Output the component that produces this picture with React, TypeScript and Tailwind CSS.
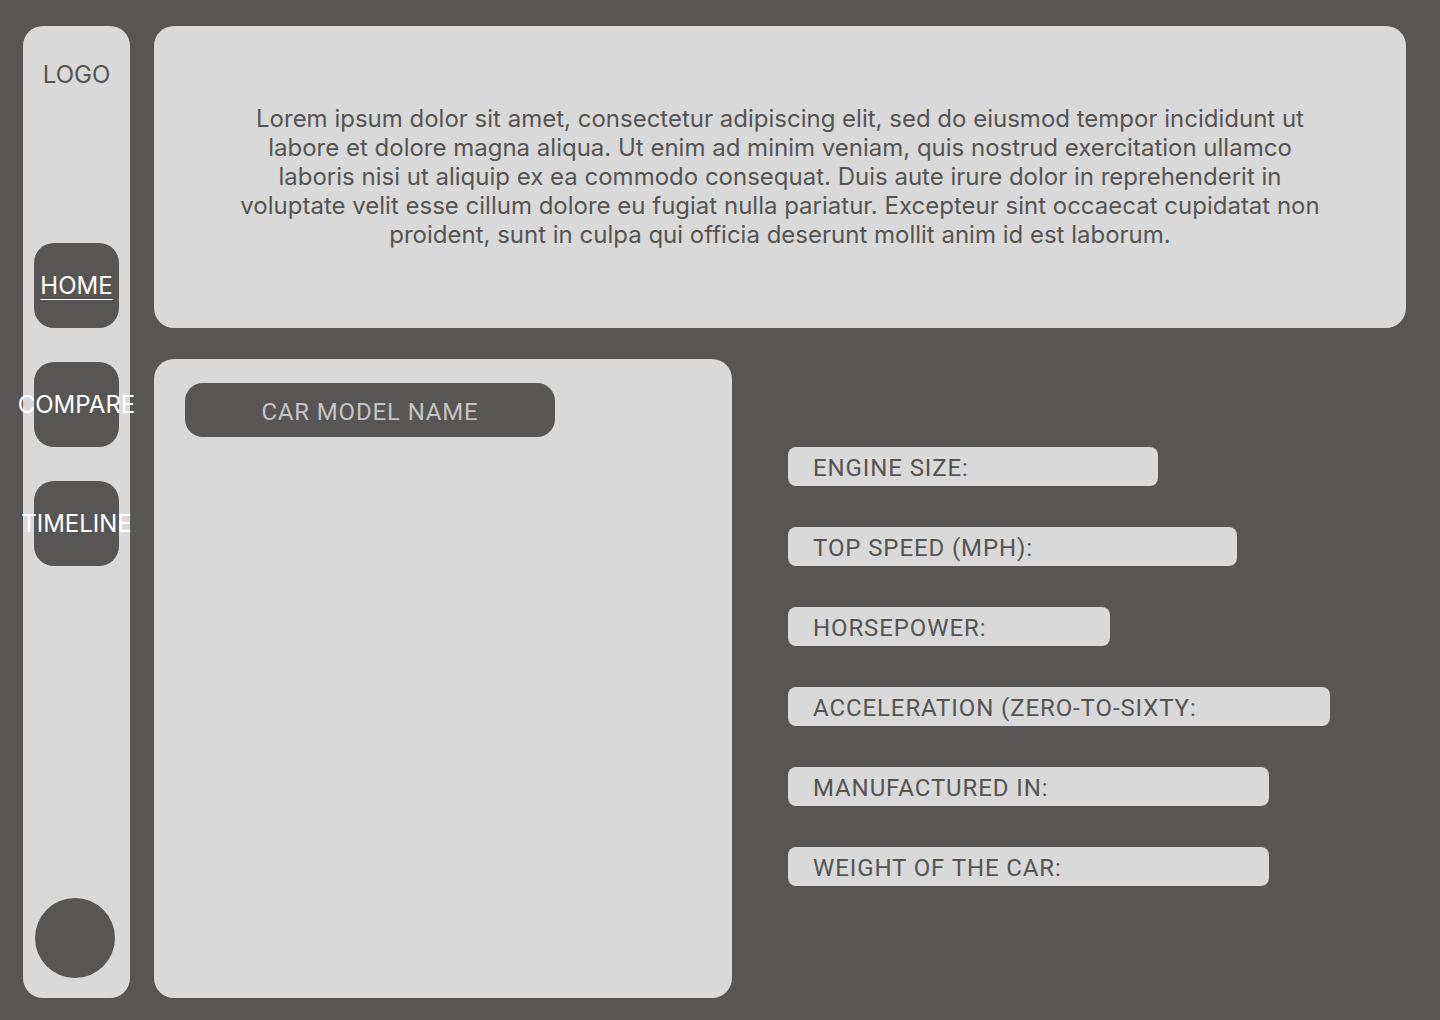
const specs = [
  { label: 'ENGINE SIZE:', width: 'w-[370px]' },
  { label: 'TOP SPEED (MPH):', width: 'w-[449px]' },
  { label: 'HORSEPOWER:', width: 'w-[322px]' },
  { label: 'ACCELERATION (ZERO-TO-SIXTY:', width: 'w-[542px]' },
  { label: 'MANUFACTURED IN:', width: 'w-[481px]' },
  { label: 'WEIGHT OF THE CAR:', width: 'w-[481px]' },
];

const navItems = [
  { label: 'HOME', active: true },
  { label: 'COMPARE', active: false },
  { label: 'TIMELINE', active: false },
];

function Sidebar() {
  return (
    <aside className="flex h-[972px] w-[107px] shrink-0 flex-col items-center rounded-[20px] bg-[#d9d9d9]">
      <div className="mt-[34px] text-[24px] leading-[29px] text-[#555453]">LOGO</div>

      <nav className="mt-[154px] flex flex-col gap-[34px]">
        {navItems.map((item) => (
          <a
            key={item.label}
            href="#"
            className="flex h-[85px] w-[85px] items-center justify-center whitespace-nowrap rounded-[20px] bg-[#575654] text-[24px] text-white"
          >
            <span className={item.active ? 'underline decoration-1 underline-offset-[5px]' : ''}>
              {item.label}
            </span>
          </a>
        ))}
      </nav>

      {/* avatar */}
      <div className="mt-auto mb-[20px] ml-[-3px] h-[80px] w-[80px] rounded-full bg-[#575654]" />
    </aside>
  );
}

export default function App() {
  return (
    <div
      className="flex h-[1020px] w-[1440px] gap-[24px] bg-[#575654] pl-[23px] pt-[26px]"
      style={{ fontFamily: 'Inter, "Noto Sans", sans-serif' }}
    >
      <Sidebar />

      <main className="flex flex-col">
        <section className="flex h-[302px] w-[1252px] items-center justify-center rounded-[20px] bg-[#d9d9d9] pb-[1px]">
          <p className="w-[1090px] text-center text-[24px] leading-[29px] text-[#555453]">
            Lorem ipsum dolor sit amet, consectetur adipiscing elit, sed do eiusmod tempor incididunt ut labore et
            dolore magna aliqua. Ut enim ad minim veniam, quis nostrud exercitation ullamco laboris nisi ut aliquip ex
            ea commodo consequat. Duis aute irure dolor in reprehenderit in voluptate velit esse cillum dolore eu fugiat
            nulla pariatur. Excepteur sint occaecat cupidatat non proident, sunt in culpa qui officia deserunt mollit
            anim id est laborum.
          </p>
        </section>

        <div className="mt-[31px] flex gap-[56px]" style={{ fontFamily: 'Roboto, "Liberation Sans", sans-serif' }}>
          <section className="h-[639px] w-[578px] rounded-[20px] bg-[#d9d9d9] px-[31px] pt-[24px]">
            <div className="flex h-[54px] w-[370px] items-center justify-center rounded-[18px] bg-[#575654] pt-[3px] text-[24px] tracking-[0.85px] text-[#c4c4c4]">
              CAR MODEL NAME
            </div>
          </section>

          <ul className="mt-[88px] flex flex-col gap-[41px]">
            {specs.map((spec) => (
              <li
                key={spec.label}
                className={`flex h-[39px] ${spec.width} items-center rounded-[8px] bg-[#d9d9d9] pl-[25px] pt-[2px] text-[24px] tracking-[0.9px] text-[#555453]`}
              >
                {spec.label}
              </li>
            ))}
          </ul>
        </div>
      </main>
    </div>
  );
}
